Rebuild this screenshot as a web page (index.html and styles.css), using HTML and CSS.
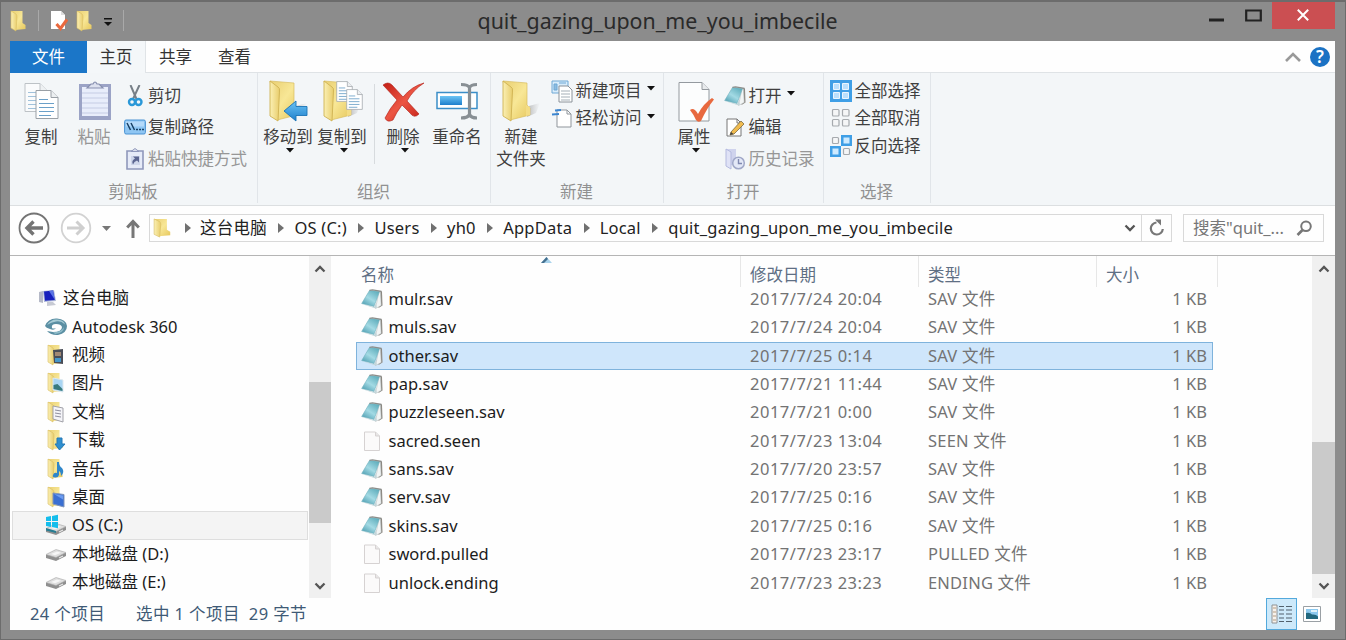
FILE: index.html
```html
<!DOCTYPE html>
<html lang="zh-CN">
<head>
<meta charset="utf-8">
<title>quit_gazing_upon_me_you_imbecile</title>
<link rel="stylesheet" href="styles.css">
</head>
<body>
<svg class="defs" width="0" height="0">
  <defs>
    <linearGradient id="gold" x1="0" x2="1" y1="0" y2="1"><stop offset="0" stop-color="#e9cf72"/><stop offset=".5" stop-color="#f8e796"/><stop offset="1" stop-color="#e6c75c"/></linearGradient>
    <linearGradient id="goldL" x1="0" x2="1"><stop offset="0" stop-color="#fbf0b4"/><stop offset="1" stop-color="#e8cd6c"/></linearGradient>
    <linearGradient id="blue" x1="0" x2="0" y1="0" y2="1"><stop offset="0" stop-color="#6cc4f5"/><stop offset="1" stop-color="#1e7fcc"/></linearGradient>
    <linearGradient id="red" x1="0" x2="1" y1="0" y2="1"><stop offset="0" stop-color="#c21f16"/><stop offset="0.5" stop-color="#ec5644"/><stop offset="1" stop-color="#c01a12"/></linearGradient>
    <linearGradient id="teal" x1="0.9" x2="0.2" y1="0" y2="1"><stop offset="0" stop-color="#58a9b8"/><stop offset="0.55" stop-color="#a3dae4"/><stop offset="1" stop-color="#4f9fb2"/></linearGradient>
    <linearGradient id="shade" x1="0" x2="1"><stop offset="0" stop-color="#8b8b8b" stop-opacity=".6"/><stop offset="1" stop-color="#aaa" stop-opacity="0"/></linearGradient>
    <symbol id="folder" viewBox="0 0 40 42">
      <path d="M26 37l9-4 4-10-11 3z" fill="url(#shade)"/>
      <path d="M2 1l24 2v22l3 3v7L9 40z" fill="url(#gold)" stroke="#d9bd62" stroke-width=".7"/>
      <path d="M2 1l8 6q2 1 1.500 4L10 41 2 36z" fill="url(#goldL)" stroke="#cfb252" stroke-width=".9"/>
      <path d="M25 25l4 2v8l-4 1z" fill="#f3dc84"/>
    </symbol>
    <symbol id="sfolder" viewBox="0 0 18 22">
      <path d="M1 1h11.500v12l3 2v4L5 20z" fill="url(#gold)"/>
      <path d="M1 1l5 3q1 1 1 3l-1 14-5-3z" fill="url(#goldL)" stroke="#d8bd62" stroke-width=".6"/>
    </symbol>
    <symbol id="page" viewBox="0 0 24 30">
      <path d="M1 1h15l7 7v21H1z" fill="#fff" stroke="#9aa0a6"/>
      <path d="M16 1v7h7" fill="#eceff1" stroke="#9aa0a6"/>
      <path d="M4 10h9M4 14h15M4 18h15M4 22h15M4 26h12" stroke="#6ba0c8" stroke-width="1.2"/>
    </symbol>
    <symbol id="note" viewBox="0 0 22 20">
      <path d="M19 2l2 .5.5 14-4 2.500z" fill="#8b8780"/>
      <path d="M18 2.500l1.500.5.7 13.500-5.700 3z" fill="#f2f5f5" stroke="#aab3b5" stroke-width=".5"/>
      <path d="M8.500 1.500l10 1L13 17.500.7 14.500z" fill="url(#teal)" stroke="#6fb0bd" stroke-width=".6"/>
      <path d="M.7 15l12.300 3 1.500-3.500 1.500 4-2 .8z" fill="#c3d6da"/>
      <path d="M8.500 1.300l3-.5 9 1.500" fill="none" stroke="#8b8d8a" stroke-width="1.200"/>
    </symbol>
    <symbol id="file" viewBox="0 0 22 20">
      <path d="M3.500 1h11l4 4v14.500h-15z" fill="#fbfafa" stroke="#d6d2d2"/>
      <path d="M14.500 1v4h4" fill="#e8e6e6" stroke="#d6d2d2"/>
    </symbol>
    <symbol id="drive" viewBox="0 0 22 16">
      <path d="M1 9l10-5 10 3v3l-10 5-10-3z" fill="#8f8f8f"/>
      <path d="M1 8.500l10-5 10 3-10 5z" fill="#dedede" stroke="#a9a9a9" stroke-width=".6"/>
      <path d="M6 8l6-2.500 4 1.200-6 2.600z" fill="#f6f6f6"/>
      <path d="M14 12l4-2" stroke="#e9e9e9" stroke-width="1.200"/>
    </symbol>
    <symbol id="down" viewBox="0 0 8 5"><path d="M0 0h8L4 4.600z" fill="#111"/></symbol>
    <symbol id="sep" viewBox="0 0 6 10"><path d="M0 0l6 5-6 5z" fill="#707070"/></symbol>
    <symbol id="chevU" viewBox="0 0 12 9"><path d="M1.500 7.500L6 3l4.500 4.500" fill="none" stroke="#555" stroke-width="2.300"/></symbol>
    <symbol id="chevD" viewBox="0 0 12 9"><path d="M1.500 1.500L6 6l4.500-4.500" fill="none" stroke="#555" stroke-width="2.300"/></symbol>
  </defs>
</svg>

<div class="window">
  <header class="titlebar">
    <div class="quick">
      <svg class="q-folder" width="18" height="22"><use href="#sfolder"/></svg>
      <i class="q-line"></i>
      <svg class="q-prop" width="20" height="22" viewBox="0 0 20 22"><path d="M2 1h10l4 4v14H2z" fill="#fff"/><path d="M12 1v4h4" fill="#ddd"/><path d="M7.500 14l4 4.500L18 9.500" fill="none" stroke="#e9683d" stroke-width="3"/></svg>
      <svg class="q-new" width="18" height="22"><use href="#sfolder"/></svg>
      <svg class="q-more" width="8" height="9" viewBox="0 0 8 9"><path d="M0 0h8v1.400H0zM0 4h8L4 8z" fill="#111"/></svg>
      <i class="q-line"></i>
    </div>
    <h1 class="title">quit_gazing_upon_me_you_imbecile</h1>
    <div class="controls">
      <svg width="15" height="20" viewBox="0 0 15 20"><path d="M0 16.500h15v3H0z" fill="#222"/></svg>
      <svg class="max" width="17" height="13" viewBox="0 0 17 13"><path d="M1.200 1.500h14.600v10H1.200z" fill="none" stroke="#222" stroke-width="2.200"/></svg>
      <div class="close"><svg width="12" height="12" viewBox="0 0 12 12"><path d="M.8.800l10.400 10.400M11.200.8L.8 11.200" stroke="#fff" stroke-width="2"/></svg></div>
    </div>
  </header>

  <main class="client">
    <nav class="tabs">
      <span class="tab tab-file">文件</span><span class="tab tab-on">主页</span><span class="tab">共享</span><span class="tab">查看</span>
      <span class="tab-right">
        <svg width="16" height="12" viewBox="0 0 16 12"><path d="M1 10l7-7 7 7" fill="none" stroke="#999" stroke-width="2.600"/></svg>
        <span class="help">?</span>
      </span>
    </nav>

    <section class="ribbon">
      <div class="group g-clip">
        <div class="items">
          <div class="big">
            <svg width="40" height="42" viewBox="0 0 40 42"><g opacity=".6"><use href="#page" x="3" y="2" width="24" height="31"/></g><use href="#page" x="14" y="9" width="24" height="31"/></svg>
            <span>复制</span>
          </div>
          <div class="big off">
            <svg width="40" height="42" viewBox="0 0 40 42"><path d="M5 4h32v36H5z" fill="#9ba3c6"/><path d="M8 7h26v29H8z" fill="#e8edfb"/><path d="M8 13h26M8 18h26M8 23h26M8 28h26M8 33h26" stroke="#c5cce4"/><path d="M13 8l4-4h2q2-4 4 0h2l4 4z" fill="#dde1ef" stroke="#878faf" stroke-width="1.200"/></svg>
            <span>粘贴</span>
          </div>
          <div class="smalls">
            <div class="small"><svg width="22" height="22" viewBox="0 0 22 22"><path d="M6.500 0l6 14M15.500 0L9 14" stroke="#777f87" stroke-width="2"/><circle cx="8" cy="17" r="3" fill="none" stroke="#2a98d8" stroke-width="2.400"/><circle cx="14.500" cy="17" r="3" fill="none" stroke="#2a98d8" stroke-width="2.400"/></svg><span>剪切</span></div>
            <div class="small"><svg width="22" height="22" viewBox="0 0 22 22"><rect x=".6" y="4" width="20.800" height="14" rx="1.500" fill="#8fc6f3" stroke="#4a92d2"/><path d="M2 5.500h18v5H2z" fill="#b5dafa"/><path d="M3 7l3.500 7M7 7l3.500 7M12 13.500h2M15 13.500h2M18 13.500h2" stroke="#174065" stroke-width="1.500"/></svg><span>复制路径</span></div>
            <div class="small off"><svg width="22" height="22" viewBox="0 0 22 22"><path d="M3 3h16v18H3z" fill="#e6ebf8" stroke="#8f98bb" stroke-width="1.600"/><path d="M7 3.500l4-3 4 3z" fill="#dce0ed" stroke="#8f98bb"/><path d="M7 8h9v9H7z" fill="#cfd7eb"/><path d="M9 8.500h6v6l-2-2q-3 1-4 4-2-4 2-6z" fill="#5c6691"/></svg><span>粘贴快捷方式</span></div>
          </div>
        </div>
        <div class="caption">剪贴板</div>
      </div>

      <div class="group g-org">
        <div class="items">
          <div class="big">
            <svg width="40" height="42" viewBox="0 0 40 42"><use href="#folder" width="40" height="42"/><path d="M16 31l12-10v5.500h11v9H28V41z" fill="url(#blue)" stroke="#1b74b5" stroke-width=".9"/></svg>
            <span>移动到</span><svg class="arrow"><use href="#down"/></svg>
          </div>
          <div class="big">
            <svg width="42" height="42" viewBox="0 0 42 42"><use href="#folder" x="1" width="40" height="42"/><use href="#page" x="15" y="0" width="17" height="23"/><use href="#page" x="25" y="8" width="17" height="23"/></svg>
            <span>复制到</span><svg class="arrow"><use href="#down"/></svg>
          </div>
          <i class="divider"></i>
          <div class="big">
            <svg width="42" height="42" viewBox="0 0 42 42"><path d="M1 5q5-4 9 0l11 12Q30 6 42 3 31 10 25 21l12 13q-5 5-9-1l-8-8q-6 8-9 15-6 3-8-2 5-10 12-18L1 5z" fill="url(#red)" stroke="#b01d14" stroke-width=".6"/></svg>
            <span>删除</span><svg class="arrow"><use href="#down"/></svg>
          </div>
          <div class="big">
            <svg width="42" height="42" viewBox="0 0 42 42"><path d="M1 12.500h40v16H1z" fill="#fff" stroke="#3b8ec8" stroke-width="1.500"/><path d="M4 16h22v9H4z" fill="url(#blue)"/><path d="M25 4.500q7 0 8.500 3 1.500-3 7.500-3M33.500 7v28M25 38q7 0 8.500-3.500Q35 38 41 38" fill="none" stroke="#888f94" stroke-width="3.200"/></svg>
            <span>重命名</span>
          </div>
        </div>
        <div class="caption">组织</div>
      </div>

      <div class="group g-new">
        <div class="items">
          <div class="big">
            <svg width="40" height="42"><use href="#folder" width="40" height="42"/></svg>
            <span>新建</span><span>文件夹</span>
          </div>
          <div class="smalls tight">
            <div class="small"><svg width="22" height="24" viewBox="0 0 22 24"><path d="M1 2h16v12H1z" fill="#d8ecfb" stroke="#6fa8d5"/><path d="M3 5h3v6H3zM8 4h7" fill="#8dbce0" stroke="#6fa8d5"/><path d="M8 7h9l4 4v12H8z" fill="#fff" stroke="#8b9299"/><path d="M10 12h9M10 15h9M10 18h9M10 21h9" stroke="#a5afb7"/></svg><span>新建项目</span><svg class="arrow"><use href="#down"/></svg></div>
            <div class="small"><svg width="22" height="22" viewBox="0 0 22 22"><path d="M6 3h10l4 4v13H6z" fill="#fff" stroke="#8f959b"/><path d="M16 3v4h4" fill="none" stroke="#8f959b"/><path d="M4 3.500l6-.5M1 7.500L8 7" stroke="#3c86d0" stroke-width="2"/></svg><span>轻松访问</span><svg class="arrow"><use href="#down"/></svg></div>
          </div>
        </div>
        <div class="caption">新建</div>
      </div>

      <div class="group g-open">
        <div class="items">
          <div class="big">
            <svg width="40" height="42" viewBox="0 0 40 42"><path d="M5 2.500h23l7 7V41H5z" fill="#fcfdfd" stroke="#949a9f"/><path d="M28 2.500v7h7" fill="#e8ebed" stroke="#949a9f"/><path d="M16 30q4-3 8 4 5-10 14-16l2 1.500Q33 28 27 41q-3 2-5-1-2-5-6-10z" fill="#e8693f"/></svg>
            <span>属性</span><svg class="arrow"><use href="#down"/></svg>
          </div>
          <div class="smalls">
            <div class="small"><svg width="22" height="20"><use href="#note"/></svg><span>打开</span><svg class="arrow"><use href="#down"/></svg></div>
            <div class="small"><svg width="22" height="22" viewBox="0 0 22 22"><path d="M3 3h10l4 4v13H3z" fill="#fff" stroke="#777"/><path d="M13 3v4h4" fill="none" stroke="#777"/><path d="M7 16L17 5l3 3L10 18l-4 1z" fill="#f1bc50" stroke="#7c6c41" stroke-width=".8"/><path d="M6 19l1-3 2.500 2z" fill="#444"/></svg><span>编辑</span></div>
            <div class="small off"><svg width="22" height="22" viewBox="0 0 22 22"><path d="M2 1h10v16H5z" fill="#cfd3ed"/><path d="M2 1l5 3v17l-5-3z" fill="#dfe2f6" stroke="#b4badf"/><circle cx="14.500" cy="15" r="5.800" fill="#e3e8f7" stroke="#a0a8c8" stroke-width="1.500"/><path d="M14.500 11v4.500H18" fill="none" stroke="#8089b0" stroke-width="1.400"/></svg><span>历史记录</span></div>
          </div>
        </div>
        <div class="caption">打开</div>
      </div>

      <div class="group g-sel">
        <div class="items">
          <div class="smalls tight">
            <div class="small"><svg width="22" height="22" viewBox="0 0 22 22"><path d="M0 0h22v22H0z" fill="#3f9fe6"/><path d="M3.500 3.500h6v6h-6zM12.500 3.500h6v6h-6zM3.500 12.500h6v6h-6zM12.500 12.500h6v6h-6z" fill="#b9e0fd" stroke="#e9f6ff"/></svg><span>全部选择</span></div>
            <div class="small"><svg width="22" height="22" viewBox="0 0 22 22"><g fill="#f5f6f7" stroke="#a6aaae" stroke-width="1.200"><rect x="2.500" y="2.500" width="6.500" height="6.500" rx="1"/><rect x="12.500" y="2.500" width="6.500" height="6.500" rx="1"/><rect x="2.500" y="12.500" width="6.500" height="6.500" rx="1"/><rect x="12.500" y="12.500" width="6.500" height="6.500" rx="1"/></g></svg><span>全部取消</span></div>
            <div class="small"><svg width="22" height="22" viewBox="0 0 22 22"><path d="M11 0h11v11H11zM0 11h11v11H0z" fill="#3f9fe6"/><path d="M13.500 2.500h6v6h-6zM2.500 13.500h6v6h-6z" fill="#cdeaff"/><g fill="#f5f6f7" stroke="#a6aaae" stroke-width="1.200"><rect x="2.500" y="2.500" width="6" height="6" rx="1"/><rect x="13.500" y="13.500" width="6" height="6" rx="1"/></g></svg><span>反向选择</span></div>
          </div>
        </div>
        <div class="caption">选择</div>
      </div>
    </section>

    <section class="address">
      <svg class="nav-c" width="32" height="32" viewBox="0 0 32 32"><circle cx="16" cy="16" r="14.500" fill="#fff" stroke="#747474" stroke-width="1.800"/><path d="M25 16H10M15.500 9.500L9 16l6.500 6.500" fill="none" stroke="#747474" stroke-width="3.400"/></svg>
      <svg class="nav-c fwd" width="32" height="32" viewBox="0 0 32 32"><circle cx="16" cy="16" r="14.300" fill="#fff" stroke="#d2d2d2" stroke-width="1.800"/><path d="M7 16h15M16.500 9.500L23 16l-6.500 6.500" fill="none" stroke="#cfcfcf" stroke-width="3"/></svg>
      <svg class="hist" width="9" height="5" viewBox="0 0 9 5"><path d="M0 0h9L4.500 5z" fill="#777"/></svg>
      <svg class="up" width="14" height="19" viewBox="0 0 14 19"><path d="M7 19V3M1.200 8.500L7 2.500l5.800 6" fill="none" stroke="#777" stroke-width="3"/></svg>
      <div class="path">
        <svg class="p-icon" width="20" height="20" viewBox="0 0 18 22" preserveAspectRatio="none"><use href="#sfolder" width="18" height="22"/></svg>
        <svg class="sep first"><use href="#sep"/></svg><span>这台电脑</span>
        <svg class="sep"><use href="#sep"/></svg><span>OS (C:)</span>
        <svg class="sep"><use href="#sep"/></svg><span>Users</span>
        <svg class="sep"><use href="#sep"/></svg><span>yh0</span>
        <svg class="sep"><use href="#sep"/></svg><span>AppData</span>
        <svg class="sep"><use href="#sep"/></svg><span>Local</span>
        <svg class="sep"><use href="#sep"/></svg><span>quit_gazing_upon_me_you_imbecile</span>
        <svg class="p-drop" width="12" height="9"><use href="#chevD"/></svg>
        <span class="refresh"><svg width="16" height="18" viewBox="0 0 16 18"><path d="M7.500 3.500A6 6 0 1 0 13.800 10" fill="none" stroke="#777" stroke-width="2.200"/><path d="M6 .5h6v6z" fill="#777"/></svg></span>
      </div>
      <div class="search"><span>搜索"quit_...</span><svg width="17" height="17" viewBox="0 0 17 17"><circle cx="10" cy="6.300" r="4.800" fill="none" stroke="#777" stroke-width="2"/><path d="M6.500 10L1.500 15" stroke="#777" stroke-width="2.600"/></svg></div>
    </section>

    <section class="panes">
      <aside class="tree">
        <div class="node root"><svg width="20" height="18" viewBox="0 0 20 18"><path d="M1 3l4-1v12l-4-1z" fill="#b5b9c7"/><path d="M5 2l11-1 2 11-12 1z" fill="#aeb8d8"/><path d="M6 2.500l9-.9 1.800 9.400-9.800.7z" fill="#1720bd"/><path d="M11 2l4-.4 1.800 9.200z" fill="#5a74e5"/><path d="M9 13h6l3 3-9 1z" fill="#c7cad3"/></svg><span>这台电脑</span></div>
        <div class="node"><svg width="22" height="18" viewBox="0 0 22 18"><path d="M0 8Q3 0 12 .5 21 1 22 8q0 7-9 9Q6 17.500 2 13l6 1q9 0 9-5-1-3-6-3-5 0-4 4 1 1 4 0-2 3-6 1Q1 10 0 8z" fill="#5b8fa3"/><path d="M2 7Q6 1 12 1.500q7 .5 8 5-4-4-9-3-5 .5-9 3.500z" fill="#a6cbd5"/><path d="M8 14q8 1 11-5 0 6-9 7z" fill="#8fbcc9"/></svg><span>Autodesk 360</span></div>
        <div class="node"><svg width="22" height="22" viewBox="0 0 22 22"><use href="#sfolder" x="2" width="18" height="22"/><path d="M8 6l10-1v15l-9-1z" fill="#4a4d57"/><path d="M10 8h6v4h-6z" fill="#a18874"/><path d="M10 14h6v4h-6z" fill="#4596c9"/></svg><span>视频</span></div>
        <div class="node"><svg width="22" height="22" viewBox="0 0 22 22"><use href="#sfolder" x="2" width="18" height="22"/><path d="M8 6l10 2v12l-10-2z" fill="#a9d5f3" stroke="#dde8ee"/><path d="M8.500 13l4-1 5 5v2l-9-2z" fill="#397a7e"/></svg><span>图片</span></div>
        <div class="node"><svg width="22" height="22" viewBox="0 0 22 22"><use href="#sfolder" x="2" width="18" height="22"/><path d="M8 5l10 2v14l-10-3z" fill="#f4f4f8" stroke="#a1a1a8"/><path d="M10 9l6 1M10 12l6 1M10 15l6 1" stroke="#8e8e9e"/></svg><span>文档</span></div>
        <div class="node"><svg width="22" height="22" viewBox="0 0 22 22"><use href="#sfolder" x="2" width="18" height="22"/><path d="M12 9h5v6h3l-5.500 6L10 15h2z" fill="#2e8fd0" stroke="#2478b5"/></svg><span>下载</span></div>
        <div class="node"><svg width="22" height="22" viewBox="0 0 22 22"><use href="#sfolder" x="2" width="18" height="22"/><path d="M12 4h2q0 4 3 6 3 4-1 8 0-4-2-5v4q-1 3-4 2.500T8 17q1-3 4-2z" fill="#2f86ca"/></svg><span>音乐</span></div>
        <div class="node"><svg width="22" height="22" viewBox="0 0 22 22"><use href="#sfolder" x="2" width="18" height="22"/><path d="M8 7l11 1.500V21L8 18z" fill="#3a6fd2" stroke="#8296b9"/><path d="M9 8l9 1.500v4z" fill="#6c9cf0"/></svg><span>桌面</span></div>
        <div class="node current"><svg width="22" height="22" viewBox="0 0 22 22"><use href="#drive" y="6" width="22" height="16"/><path d="M1 3l5-1v5H1zM7 2l6-1.200V7H7zM1 8h5v5l-5-1zM7 8h6v6.200L7 13z" fill="#14bdec"/><path d="M1 14l10 3v2L1 16.500z" fill="#267d93"/></svg><span>OS (C:)</span></div>
        <div class="node"><svg width="22" height="16"><use href="#drive"/></svg><span>本地磁盘 (D:)</span></div>
        <div class="node"><svg width="22" height="16"><use href="#drive"/></svg><span>本地磁盘 (E:)</span></div>
      </aside>
      <div class="scroll scroll-tree"><svg width="12" height="9"><use href="#chevU"/></svg><i class="thumb"></i><svg width="12" height="9"><use href="#chevD"/></svg></div>

      <div class="files">
        <div class="row head"><span>名称<svg class="sort" width="11" height="6" viewBox="0 0 11 6"><path d="M0 6l5.500-6L11 6z" fill="#a9d3ec"/><path d="M0 6l5.500-6L7 2 3 6z" fill="#44708f"/></svg></span><span>修改日期</span><span>类型</span><span>大小</span></div>
        <div class="row"><span><svg><use href="#note"/></svg>mulr.sav</span><span>2017/7/24 20:04</span><span>SAV 文件</span><span>1 KB</span></div>
        <div class="row"><span><svg><use href="#note"/></svg>muls.sav</span><span>2017/7/24 20:04</span><span>SAV 文件</span><span>1 KB</span></div>
        <div class="row selected"><span><svg><use href="#note"/></svg>other.sav</span><span>2017/7/25 0:14</span><span>SAV 文件</span><span>1 KB</span></div>
        <div class="row"><span><svg><use href="#note"/></svg>pap.sav</span><span>2017/7/21 11:44</span><span>SAV 文件</span><span>1 KB</span></div>
        <div class="row"><span><svg><use href="#note"/></svg>puzzleseen.sav</span><span>2017/7/21 0:00</span><span>SAV 文件</span><span>1 KB</span></div>
        <div class="row"><span><svg><use href="#file"/></svg>sacred.seen</span><span>2017/7/23 13:04</span><span>SEEN 文件</span><span>1 KB</span></div>
        <div class="row"><span><svg><use href="#note"/></svg>sans.sav</span><span>2017/7/20 23:57</span><span>SAV 文件</span><span>1 KB</span></div>
        <div class="row"><span><svg><use href="#note"/></svg>serv.sav</span><span>2017/7/25 0:16</span><span>SAV 文件</span><span>1 KB</span></div>
        <div class="row"><span><svg><use href="#note"/></svg>skins.sav</span><span>2017/7/25 0:16</span><span>SAV 文件</span><span>1 KB</span></div>
        <div class="row"><span><svg><use href="#file"/></svg>sword.pulled</span><span>2017/7/23 23:17</span><span>PULLED 文件</span><span>1 KB</span></div>
        <div class="row"><span><svg><use href="#file"/></svg>unlock.ending</span><span>2017/7/23 23:23</span><span>ENDING 文件</span><span>1 KB</span></div>
      </div>
      <div class="scroll scroll-files"><svg width="12" height="9"><use href="#chevU"/></svg><i class="thumb"></i><svg width="12" height="9"><use href="#chevD"/></svg></div>
    </section>

    <footer class="status">
      <span class="s-count">24 个项目</span><span class="s-sel">选中 1 个项目</span><span class="s-size">29 字节</span>
      <div class="views">
        <div class="view on"><svg width="22" height="20" viewBox="0 0 22 20"><path d="M1 1h5v18H1z" fill="#f6f2ed" stroke="#8f9294"/><path d="M2 4h3M2 8h3M2 12h3M2 16h3" stroke="#b59b7e"/><path d="M8 2.500h5M15 2.500h6M8 6h5M15 6h6M8 10h5M15 10h6M8 14h5M15 14h6M8 17.500h5M15 17.500h6" stroke="#52616d" stroke-width="1.100"/></svg></div>
        <div class="view"><svg width="18" height="16" viewBox="0 0 18 16"><path d="M.5.5h17v15H.5z" fill="#fff" stroke="#9aa0a5"/><path d="M3 3h12v10H3z" fill="#8cc9ef"/><path d="M3 7q4-1 6 1.500 4-.5 6 2v2.500H3z" fill="#22687f"/><path d="M8 4h6v2H8z" fill="#dff3fc"/></svg></div>
      </div>
    </footer>
  </main>
</div>
</body>
</html>
```
FILE: styles.css
```css
* { box-sizing: border-box; }
body {
  margin: 0;
  font: 16.5px/22px "Noto Sans", "Noto Sans CJK SC", sans-serif;
  color: #222;
  overflow: hidden;
}
svg { display: block; flex: none; }
.defs { position: absolute; }
span { white-space: nowrap; }

.window {
  width: 1346px;
  height: 640px;
  background: #8c8c8c;
  border: 1px solid #6c6c6c;
  border-top-width: 2px;
  display: grid;
  grid-template-rows: 39px 589px;
  padding: 0 10px 0 9px;
}

/* title bar */
.titlebar { display: grid; grid-template-columns: 1fr auto 1fr; }
.quick { display: flex; align-items: center; height: 37px; }
.q-line { width: 1px; height: 21px; background: #a9a9a9; }
.q-folder { margin-right: 10px; }
.q-prop { margin-left: 10px; }
.q-new { margin-left: 7px; margin-right: 10px; }
.q-more { margin-top: 4px; margin-right: 11px; }
.title { margin: 0; padding-right: 30px; font-weight: 400; font-size: 21.400px; line-height: 38px; color: #2a2a2a; }
.controls { display: flex; justify-content: flex-end; }
.controls .max { margin: 7px 10px 0 21px; }
.close {
  width: 63px; height: 27px;
  background: #cb4f52;
  display: flex; align-items: center; justify-content: center;
  padding-right: 2px;
  padding-bottom: 2px;
}

.client {
  background: #fefefe;
  display: grid;
  grid-template-rows: 32px 133px 50px 342px 32px;
}

/* tabs */
.tabs { display: flex; border-bottom: 1px solid #dfe3e6; }
.tab { width: 59px; height: 32px; line-height: 32px; text-align: center; color: #333; }
.tab-file { width: 77px; background: #1b76c8; color: #fff; }
.tab-on { background: #f4f7f9; border-right: 1px solid #e0e4e7; }
.tab-right { margin-left: auto; display: flex; align-items: center; gap: 9px; padding-right: 5px; }
.help {
  width: 20px; height: 20px; border-radius: 50%;
  background: #1b72c4; color: #fff;
  font-weight: 600; font-size: 17px; line-height: 20px; text-align: center;
}

/* ribbon */
.ribbon { display: flex; background: #f3f6f8; border-bottom: 1px solid #dcdfe1; }
.group {
  display: grid;
  grid-template-rows: 109px 22px;
  border-right: 1px solid #e1e5e9;
  height: 130px;
  color: #3f3f3f;
}
.g-clip { width: 248px; }
.g-org { width: 233px; }
.g-new { width: 173px; }
.g-open { width: 160px; }
.g-sel { width: 107px; }
.items { display: flex; padding: 7px 0 0 3px; }
.g-clip .items { padding-left: 4.500px; }
.g-sel .items { padding-left: 6px; }
.big { width: 54px; display: flex; flex-direction: column; align-items: center; }
.g-clip .big { width: 53px; }
.big > svg:first-child { margin-bottom: 4px; }
.arrow { width: 8px; height: 5px; }
.big > .arrow { margin-left: 4px; }
.small .arrow { margin-left: 3px; margin-top: -4px; }
.off { color: #979797; }
.divider { width: 1px; height: 80px; margin: 4px 1px 0 5px; background: #d7dbde; }
.smalls { margin-left: 3px; }
.g-sel .smalls { margin-left: 0; }
.small { height: 31.500px; display: flex; align-items: center; gap: 2.500px; }
.tight { margin-top: -3px; }
.tight .small { height: 27.500px; }
.caption { text-align: center; color: #919191; line-height: 19px; padding-right: 1px; }

/* address bar */
.address { display: flex; align-items: center; padding: 0 11px 5px 8px; border-bottom: 1px solid #b5b5b5; }
.fwd { margin-left: 10px; }
.hist { margin-left: 10px; }
.up { margin-left: 15px; }
.path {
  margin-left: 9px; width: 1023px; height: 28px;
  border: 1px solid #d9d9d9;
  display: flex; align-items: center;
  letter-spacing: .22px;
}
.p-icon { margin-left: 3px; margin-right: 5px; }
.sep { width: 6px; height: 10px; margin: 0 10px 0 11.500px; }
.sep.first { margin: 0 9px 0 7px; }
.p-drop { margin-left: auto; margin-right: 5px; }
.refresh {
  width: 30px; height: 26px; border-left: 1px solid #d9d9d9;
  display: flex; align-items: center; justify-content: center;
}
.search {
  margin-left: 11px; width: 141px; height: 28px;
  border: 1px solid #d9d9d9; color: #777;
  display: flex; align-items: center; justify-content: space-between;
  padding: 0 10px 0 9px;
}

/* panes */
.panes { display: grid; grid-template-columns: 299px 22px 981px 23px; }
.tree { padding: 28px 1px 0 2px; overflow: hidden; color: #1c1c1c; }
.node { height: 28.400px; display: flex; align-items: center; gap: 5px; padding-left: 32px; border: 1px solid transparent; }
.root { padding-left: 25px; }
.current { background: #f4f4f4; border-color: #dedede; }

.scroll { background: #f0f0f0; display: flex; flex-direction: column; align-items: center; padding: 8px 0 7px; }
.scroll svg:last-child { margin-top: auto; }
.thumb { width: 100%; background: #cacaca; }
.scroll-tree .thumb { margin-top: 109px; height: 141px; }
.scroll-files .thumb { margin-top: 169px; height: 132px; }

.files { padding-left: 25px; color: #737373; }
.row {
  width: 857px; height: 28.360px;
  display: grid; grid-template-columns: 385px 178px 178px 1fr;
  align-items: center;
  border: 1px solid transparent;
}
.row > span { padding-left: 8px; }
.row > span:nth-child(2) { letter-spacing: .5px; }
.row > span:nth-child(3) { letter-spacing: .2px; }
.row > span:first-child { display: flex; align-items: center; gap: 5.500px; padding-left: 4px; color: #1c1c1c; }
.row > span:first-child svg { width: 22px; height: 20px; }
.row > span:last-child { text-align: right; padding-right: 5px; }
.selected { background: #cfe6fb; border-color: #7fb3dc; }
.head { height: 28.800px; width: 862px; border: 0; color: #5f6f84; align-items: stretch; }
.row.head > span { border-right: 1px solid #e7e7e7; line-height: 38px; height: 31px; padding-left: 9px; letter-spacing: 0; }
.row.head > span:first-child { position: relative; color: #5f6f84; line-height: 22px; padding: 7px 0 0 5px; }
.row.head > span:last-child { text-align: left; }
.row.head .sort { position: absolute; left: 185px; top: 1px; width: 11px; height: 6px; }

/* status bar */
.status { display: flex; align-items: center; color: #3f5a76; padding: 0 0 0 20px; letter-spacing: .4px; }
.s-sel { margin-left: 31px; }
.s-size { margin-left: 9px; }
.views { margin-left: auto; margin-right: 14px; display: flex; align-items: center; height: 32px; gap: 6px; }
.view.on { width: 31px; height: 32px; background: #cde9fa; border: 1px solid #53a9dc; display: flex; align-items: center; justify-content: center; }
```
